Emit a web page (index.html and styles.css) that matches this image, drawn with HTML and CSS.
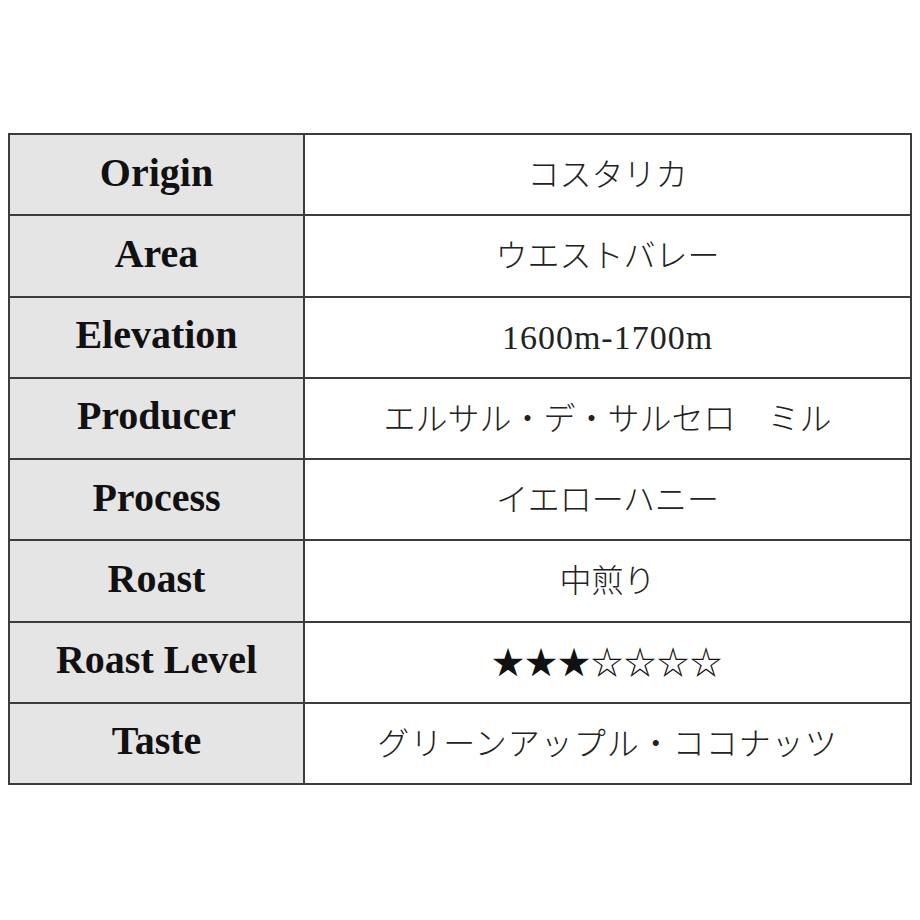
FILE: index.html
```html
<!DOCTYPE html>
<html lang="ja">
<head>
<meta charset="utf-8">
<link rel="stylesheet" href="styles.css">
</head>
<body>
<div class="page">
  <table class="spec">
    <tr><th>Origin</th><td>コスタリカ</td></tr>
    <tr><th>Area</th><td>ウエストバレー</td></tr>
    <tr><th>Elevation</th><td><span class="latin">1600m-1700m</span></td></tr>
    <tr><th>Producer</th><td>エルサル・デ・サルセロ　ミル</td></tr>
    <tr><th>Process</th><td>イエローハニー</td></tr>
    <tr><th>Roast</th><td>中煎り</td></tr>
    <tr><th>Roast Level</th><td class="stars">★★★☆☆☆☆</td></tr>
    <tr><th>Taste</th><td class="wide">グリーンアップル・ココナッツ</td></tr>
  </table>
</div>
</body>
</html>
```
FILE: styles.css
```css
html, body {
  margin: 0;
  padding: 0;
  background: #ffffff;
}
.page {
  padding: 133px 0 0 8px;
}
.spec {
  border-collapse: collapse;
  width: 904px;
  height: 652px;
  table-layout: fixed;
}
.spec tr {
  height: 12.5%;
}
.spec th,
.spec td {
  border: 2px solid #3c3c3c;
  text-align: center;
  vertical-align: middle;
  padding: 0 0 5px 0;
  color: #111;
}
.spec th {
  width: 293px;
  background: #e6e5e6;
  font-family: "Liberation Serif", "Times New Roman", serif;
  font-weight: 700;
  font-size: 40px;
}
.spec td {
  background: #ffffff;
  font-family: "Noto Sans CJK JP", sans-serif;
  font-weight: 300;
  font-size: 32px;
  color: #222;
}
.spec td.wide {
  letter-spacing: 1px;
}
.spec td.stars {
  font-size: 32px;
  letter-spacing: 1px;
  font-weight: 400;
  color: #111;
}
.latin {
  font-family: "Liberation Serif", "Times New Roman", serif;
  font-weight: 400;
  font-size: 34px;
  letter-spacing: 1px;
}
```
